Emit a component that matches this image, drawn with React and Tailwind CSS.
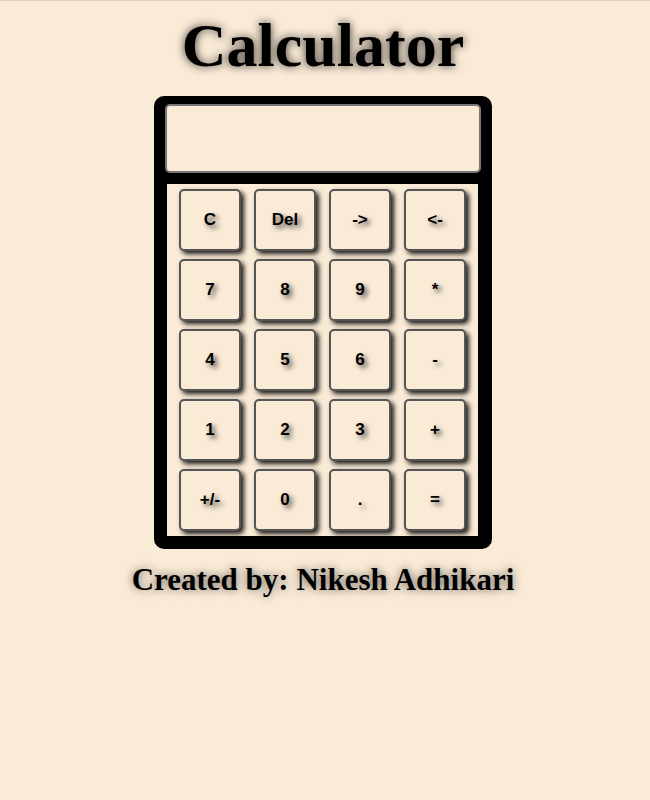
const KEYS = [
  ['C', 'Del', '->', '<-'],
  ['7', '8', '9', '*'],
  ['4', '5', '6', '-'],
  ['1', '2', '3', '+'],
  ['+/-', '0', '.', '='],
];

function Key({ label }) {
  return (
    <button
      className="w-[62px] h-[62px] rounded-[5px] border-2 border-[#555] bg-[#faebd7] text-[17px] font-bold text-black shadow-[3px_3px_5px_rgba(0,0,0,0.9)] [text-shadow:3px_3px_5px_rgba(0,0,0,0.7)]"
      style={{ fontFamily: '"Liberation Sans", Arial, sans-serif' }}
    >
      {label}
    </button>
  );
}

export default function App() {
  return (
    <div className="min-h-[800px] bg-[#faebd7] border-t border-[#e0d2c2] pr-[4px] flex flex-col items-center">
      <h1
        className="mt-[7px] text-[62px] leading-[74px] font-bold text-black [text-shadow:0_0_10px_rgba(0,0,0,0.8)]"
        style={{ fontFamily: '"Liberation Serif", "Times New Roman", serif' }}
      >
        Calculator
      </h1>

      {/* calculator body */}
      <div className="mt-[14px] w-[338px] bg-black rounded-[10px] pt-[8px] pb-[13px] flex flex-col">
        <div className="mx-[11px] h-[69px] rounded-[5px] border-2 border-[#777] bg-[#faebd7]" />
        <div className="mt-[11px] ml-[13px] w-[311px] bg-[#faebd7] px-[12px] pt-[5px] pb-[5px] grid grid-cols-4 gap-x-[13px] gap-y-[8px]">
          {KEYS.flat().map((k, i) => (
            <Key key={i} label={k} />
          ))}
        </div>
      </div>

      <p
        className="mt-[13px] text-[31px] leading-[36px] font-bold text-black [text-shadow:0_0_10px_rgba(0,0,0,0.6)]"
        style={{ fontFamily: '"Liberation Serif", "Times New Roman", serif' }}
      >
        Created by: Nikesh Adhikari
      </p>
    </div>
  );
}
